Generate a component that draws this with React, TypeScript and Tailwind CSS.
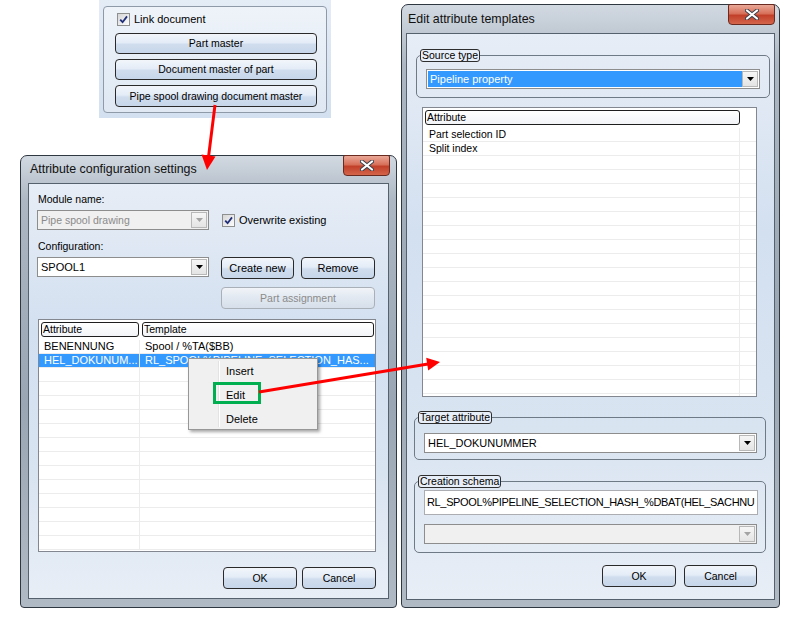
import React from "react";

const Arrow = ({ disabled }: { disabled?: boolean }) => (
  <svg width="7" height="4" viewBox="0 0 7 4">
    <path d="M0 0h7L3.5 4z" fill={disabled ? "#a3a3a3" : "#000"} />
  </svg>
);

const Check = () => (
  <span className="flex h-[13px] w-[13px] shrink-0 items-center justify-center border border-[#8e8f8f] bg-[linear-gradient(135deg,#d6d6d6,#fcfcfc)]">
    <svg width="9" height="9" viewBox="0 0 9 9">
      <path d="M1.2 4.6 L3.6 7.2 L8 1.4" fill="none" stroke="#1f2f7a" strokeWidth="1.8" />
    </svg>
  </span>
);

const Btn = ({
  children,
  className = "",
  disabled,
}: {
  children: React.ReactNode;
  className?: string;
  disabled?: boolean;
}) => (
  <div
    className={`flex items-center justify-center rounded-[4px] border ${
      disabled
        ? "border-[#a9b0b8] text-[#8b8b8b] bg-[linear-gradient(to_bottom,#f1f4f8,#e1e8f1_50%,#d6dfea)]"
        : "border-[#2a2a2a] text-black bg-[linear-gradient(to_bottom,#f2f6fb,#e4ecf7_45%,#d0ddee_55%,#c7d6ea)]"
    } ${className}`}
  >
    {children}
  </div>
);

const Combo = ({
  text,
  className = "",
  disabled,
  selected,
}: {
  text?: string;
  className?: string;
  disabled?: boolean;
  selected?: boolean;
}) => (
  <div
    className={`flex h-[20px] border border-[#8d8d8d] p-[1px] ${
      disabled ? "bg-[#f0f0f0]" : "bg-white"
    } ${className}`}
  >
    <div
      className={`flex flex-1 items-center overflow-hidden whitespace-nowrap pl-[2px] ${
        selected ? "bg-[#3399ff] text-white" : disabled ? "text-[#8a8a8a]" : "text-black"
      }`}
    >
      {text}
    </div>
    <div className="flex w-[16px] items-center justify-center border border-[#b8b8b8] bg-[linear-gradient(to_bottom,#f6f6f6,#e4e4e4)]">
      <Arrow disabled={disabled} />
    </div>
  </div>
);

const Close = ({ className = "" }: { className?: string }) => (
  <div
    className={`absolute flex w-[47px] items-center justify-center rounded-b-[4px] rounded-t-[2px] border border-[#6b2a20] bg-[linear-gradient(to_bottom,#eaa897,#d7705a_45%,#c2402a_55%,#d4654b)] ${className}`}
  >
    <svg width="14" height="11" viewBox="0 0 14 11">
      <path d="M2 1.5 L12 9.5 M12 1.5 L2 9.5" stroke="#3a3f4a" strokeWidth="4" strokeLinecap="round" />
      <path d="M2 1.5 L12 9.5 M12 1.5 L2 9.5" stroke="#ffffff" strokeWidth="2.2" strokeLinecap="round" />
    </svg>
  </div>
);

const Legend = ({ children }: { children: React.ReactNode }) => (
  <legend className="ml-[3px] h-[13px] rounded-[3px] border border-[#2e2e2e] bg-[#e8eef7] px-[1px] leading-[11px]">
    {children}
  </legend>
);

const Head = ({ children, className = "" }: { children: React.ReactNode; className?: string }) => (
  <div
    className={`flex h-[15px] items-center rounded-[3px] border border-[#1e1e1e] bg-[linear-gradient(to_bottom,#ffffff,#f2f4f7)] pl-[1px] ${className}`}
  >
    {children}
  </div>
);

const frame =
  "absolute border border-[#2f3741] bg-[linear-gradient(to_bottom,#d2d9e1,#acb7c3_10%,#9aa6b3_55%,#b0bac5)] rounded-t-[7px] rounded-b-[4px]";
const client =
  "border border-[#56616e] bg-[linear-gradient(to_bottom,#e7edf6,#d3e0f0_35%,#d9e4f1_70%,#e8eef6)]";

const leftRows = [
  { a: "BENENNUNG", t: "Spool / %TA($BB)" },
  { a: "HEL_DOKUNUM...", t: "RL_SPOOL%PIPELINE_SELECTION_HAS...", sel: true },
];

export default function App() {
  return (
    <div className="relative h-[621px] w-[796px] overflow-hidden bg-white font-['Liberation_Sans',Arial,sans-serif] text-[10.5px] leading-[13px] text-black">
      {/* top panel */}
      <div className="absolute left-[99px] top-0 h-[118px] w-[232px] bg-[linear-gradient(to_bottom,#e4ecf6,#d3e0ef)] pl-[4px] pt-[6px]">
        <div className="h-[107px] w-[224px] rounded-[4px] border border-[#8f9aa8] bg-[linear-gradient(to_bottom,#eef3f9,#dfe8f3)] pl-[11px] pt-[6px]">
          <div className="flex h-[13px] items-center gap-[4px] pl-[2px]">
            <Check />
            <span className="text-[11px]">Link document</span>
          </div>
          <div className="mt-[7px] flex flex-col gap-[5px]">
            <Btn className="h-[21px] w-[202px]">Part master</Btn>
            <Btn className="h-[21px] w-[202px]">Document master of part</Btn>
            <Btn className="h-[22px] w-[202px]">Pipe spool drawing document master</Btn>
          </div>
        </div>
      </div>

      {/* left dialog */}
      <div className={`${frame} left-[20px] top-[155px] h-[453px] w-[377px] px-[7px]`}>
        <div className="flex h-[27px] items-center pl-[2px] text-[12.4px] text-[#111]">
          Attribute configuration settings
        </div>
        <Close className="right-[6px] top-[-1px] h-[21px]" />
        <div className={`${client} h-[416px] pl-[8px]`}>
          <div className="mt-[9px] pl-[1px]">Module name:</div>
          <div className="mt-[4px] flex items-center">
            <Combo text="Pipe spool drawing" disabled className="w-[172px]" />
            <div className="ml-[13px] flex items-center gap-[4px]">
              <Check />
              <span className="text-[11px]">Overwrite existing</span>
            </div>
          </div>
          <div className="mt-[10px] pl-[1px]">Configuration:</div>
          <div className="mt-[4px] flex items-start">
            <Combo text="SPOOL1" className="w-[172px] text-[11px]" />
            <Btn className="ml-[12px] h-[22px] w-[73px] text-[11px]">Create new</Btn>
            <Btn className="ml-[7px] h-[22px] w-[74px] text-[11px]">Remove</Btn>
          </div>
          <Btn disabled className="ml-[184px] mt-[8px] h-[22px] w-[154px]">
            Part assignment
          </Btn>
          <div className="ml-[1px] mt-[10px] h-[233px] w-[338px] overflow-hidden border border-[#828790] bg-white">
            <div className="flex h-[20px] items-start gap-[3px] pl-[2px] pt-[2px]">
              <Head className="w-[98px]">Attribute</Head>
              <Head className="w-[232px]">Template</Head>
            </div>
            {Array.from({ length: 15 }).map((_, i) => {
              const r = leftRows[i];
              return (
                <div
                  key={i}
                  className={`flex h-[14px] border-b border-[#ececec] text-[11px] ${r?.sel ? "bg-[#3399ff] text-white" : ""}`}
                >
                  <div className="w-[101px] overflow-hidden whitespace-nowrap border-r border-[#ececec] pl-[5px] leading-[13px]">
                    {r?.a}
                  </div>
                  <div className="flex-1 overflow-hidden whitespace-nowrap pl-[5px] leading-[13px]">{r?.t}</div>
                </div>
              );
            })}
          </div>
          <div className="mt-[15px] flex justify-end gap-[5px] pr-[12px]">
            <Btn className="h-[22px] w-[74px]">OK</Btn>
            <Btn className="h-[22px] w-[74px]">Cancel</Btn>
          </div>
        </div>

        {/* context menu */}
        <div className="absolute left-[167px] top-[202px] h-[72px] w-[130px] border border-[#979797] bg-[#f0f0f0] text-[11px] shadow-[2px_2px_3px_rgba(0,0,0,0.35)]">
          <div className="absolute bottom-[2px] left-[29px] top-[2px] w-[2px] border-l border-[#e2e3e3] bg-white" />
          {["Insert", "Edit", "Delete"].map((t) => (
            <div key={t} className="flex h-[24px] items-center pl-[37px]">
              {t}
            </div>
          ))}
          <div className="absolute left-[24px] top-[23px] h-[22px] w-[48px] border-[3px] border-[#00b050]" />
        </div>
      </div>

      {/* right dialog */}
      <div className={`${frame} left-[401px] top-[4px] h-[604px] w-[379px] px-[4px]`}>
        <div className="flex h-[28px] items-center pl-[2px] text-[12.4px] text-[#111]">
          Edit attribute templates
        </div>
        <Close className="right-[4px] top-[-1px] h-[21px]" />
        <div className={`${client} h-[567px]`}>
          <fieldset className="ml-[9px] mt-[15px] w-[353px] rounded-[5px] border border-[#6f7a87]">
            <Legend>Source type</Legend>
            <div className="px-[9px] pb-[8px] pt-[7px]">
              <Combo text="Pipeline property" selected className="w-[334px] text-[11px]" />
            </div>
          </fieldset>

          <div className="ml-[15px] mt-[9px] h-[290px] w-[335px] overflow-hidden border border-[#828790] bg-white">
            <div className="flex h-[20px] items-start pl-[2px] pt-[2px]">
              <Head className="w-[315px]">Attribute</Head>
            </div>
            {Array.from({ length: 20 }).map((_, i) => (
              <div key={i} className="flex h-[14px] border-b border-[#ececec]">
                <div className="w-[317px] border-r border-[#ececec] pl-[6px] leading-[13px]">
                  {i === 0 ? "Part selection ID" : i === 1 ? "Split index" : ""}
                </div>
              </div>
            ))}
          </div>

          <fieldset className="ml-[7px] mt-[14px] w-[352px] rounded-[5px] border border-[#6f7a87]">
            <Legend>Target attribute</Legend>
            <div className="pb-[6px] pl-[9px] pt-[9px]">
              <Combo text="HEL_DOKUNUMMER" className="w-[333px] text-[11px]" />
            </div>
          </fieldset>

          <fieldset className="ml-[7px] mt-[15px] w-[352px] rounded-[5px] border border-[#6f7a87]">
            <Legend>Creation schema</Legend>
            <div className="pb-[8px] pl-[9px] pt-[2px]">
              <div className="flex h-[25px] w-[334px] items-center overflow-hidden whitespace-nowrap border border-[#abadb3] bg-white pl-[2px] text-[11px] tracking-[-0.35px]">
                RL_SPOOL%PIPELINE_SELECTION_HASH_%DBAT(HEL_SACHNU
              </div>
              <Combo disabled className="mt-[9px] w-[333px]" />
            </div>
          </fieldset>

          <div className="mt-[12px] flex justify-end gap-[8px] pr-[17px]">
            <Btn className="h-[22px] w-[74px]">OK</Btn>
            <Btn className="h-[22px] w-[73px]">Cancel</Btn>
          </div>
        </div>
      </div>

      {/* red arrows */}
      <svg className="pointer-events-none absolute left-0 top-0" width="796" height="621" viewBox="0 0 796 621">
        <line x1="215" y1="105" x2="208.5" y2="157" stroke="#ff0000" strokeWidth="3" />
        <polygon points="201.5,154.5 215.5,156.5 207,170" fill="#ff0000" />
        <line x1="259" y1="392" x2="428" y2="364" stroke="#ff0000" strokeWidth="3" />
        <polygon points="440,362 428.2,370.5 426.2,357.8" fill="#ff0000" />
      </svg>
    </div>
  );
}
